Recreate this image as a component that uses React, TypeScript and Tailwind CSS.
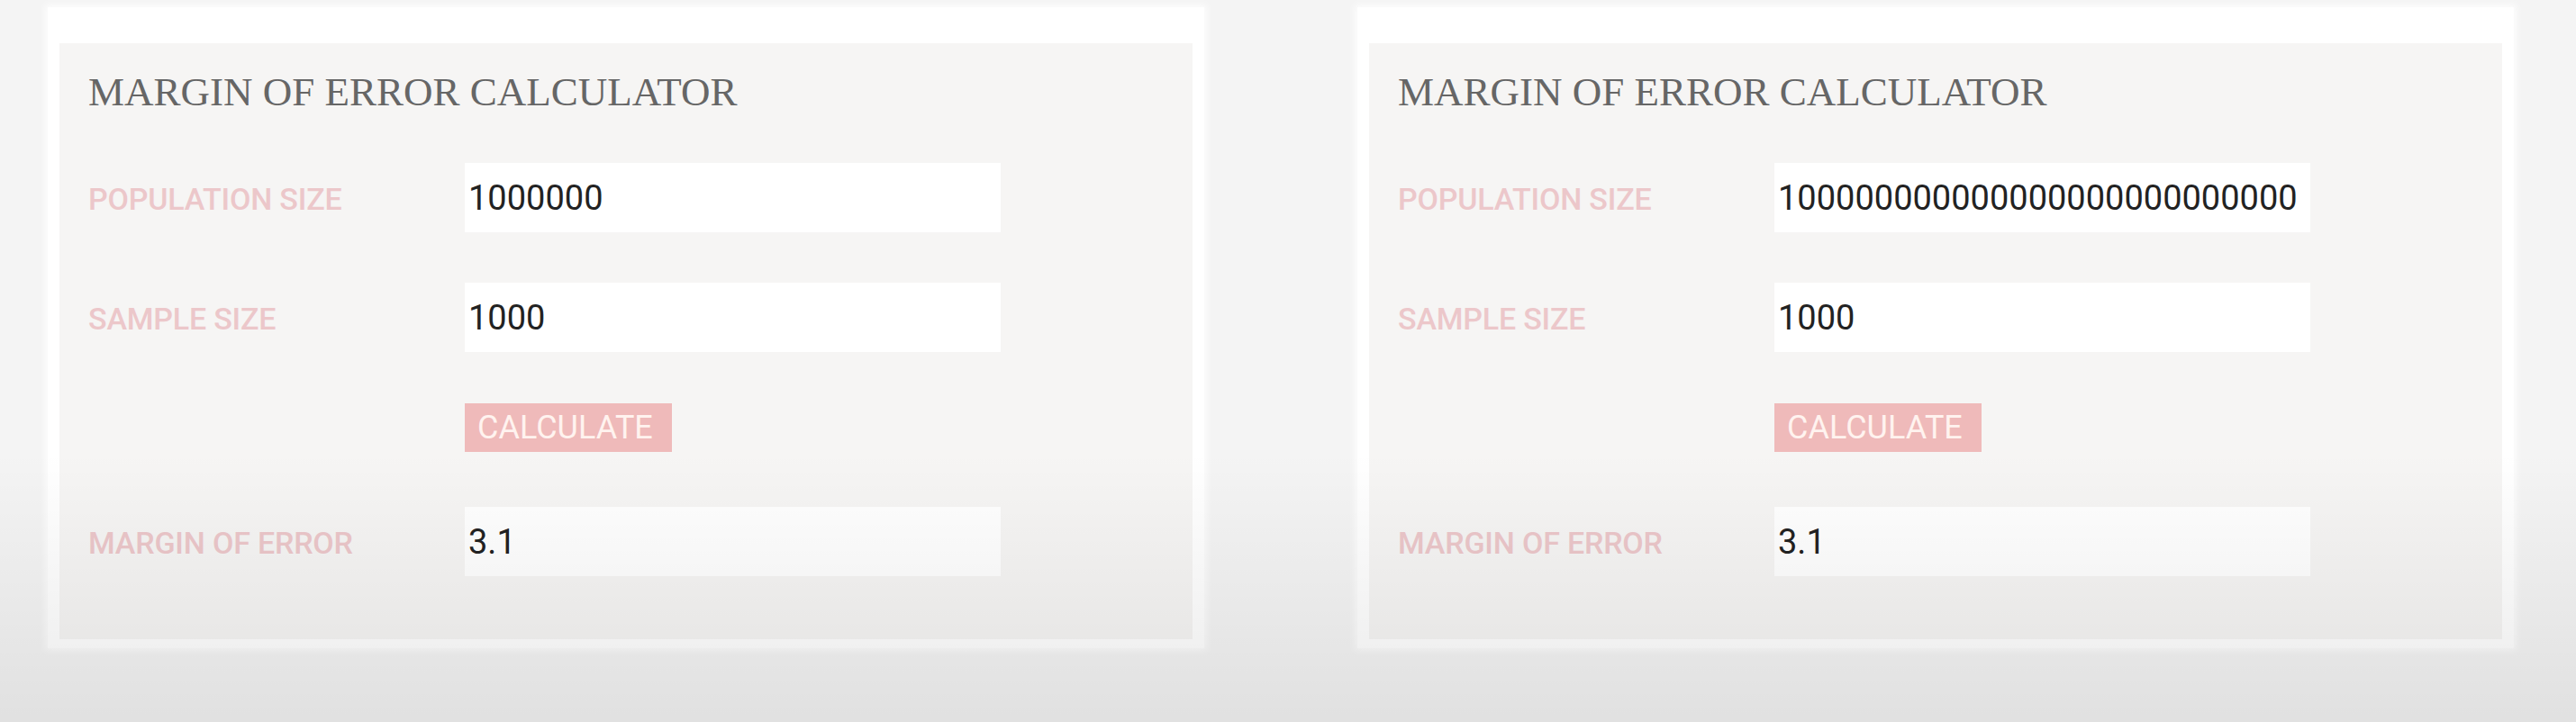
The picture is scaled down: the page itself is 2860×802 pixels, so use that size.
import React from 'react';

interface Props {
  population: string;
  sample: string;
  result: string;
}

const Field: React.FC<{ label: string; value: string; className?: string }> = ({ label, value, className }) => (
  <div className={`flex items-center h-[77px] ${className ?? ''}`}>
    <label className="w-[418px] shrink-0 pt-[4px] font-['Roboto'] font-medium text-[34px] text-[#ecc7ca] tracking-[-0.2px]">
      {label}
    </label>
    <input
      type="text"
      readOnly
      value={value}
      className="w-[595px] h-full bg-white px-[4px] font-['Roboto'] text-[38px] text-[#222] outline-none border-0"
    />
  </div>
);

const Calculator: React.FC<Props> = ({ population, sample, result }) => {
  return (
    <div className="w-[1284px] bg-white pt-[40px] pb-[10px] px-[13px] shadow-[0_0_8px_3px_rgba(255,255,255,0.8)]">
      <div className="bg-[#f6f5f4] pl-[32px] pt-[32px] pb-[70px]">
        <h2 className="font-['Liberation_Serif',serif] text-[45px] leading-[44px] text-[#666]">
          MARGIN OF ERROR CALCULATOR
        </h2>

        <Field label="POPULATION SIZE" value={population} className="mt-[57px]" />
        <Field label="SAMPLE SIZE" value={sample} className="mt-[56px]" />

        <div className="flex mt-[57px]">
          <div className="w-[418px] shrink-0" />
          <button className="h-[54px] w-[230px] bg-[#efbaba] pl-[14px] text-left font-['Roboto'] text-[36px] text-[#fff3ef]">
            CALCULATE
          </button>
        </div>

        <Field label="MARGIN OF ERROR" value={result} className="mt-[61px]" />
      </div>
    </div>
  );
};

export default function App() {
  return (
    <div className="relative h-[802px] w-[2860px] overflow-hidden bg-[#f4f4f4]">
      <div className="flex gap-[170px] pl-[53px] pt-[8px]">
        <Calculator population="1000000" sample="1000" result="3.1" />
        <Calculator population="100000000000000000000000000" sample="1000" result="3.1" />
      </div>
      {/* video-style shading at the bottom */}
      <div className="pointer-events-none absolute inset-x-0 bottom-0 h-[300px] bg-linear-to-b from-transparent to-black/[0.08]" />
    </div>
  );
}
